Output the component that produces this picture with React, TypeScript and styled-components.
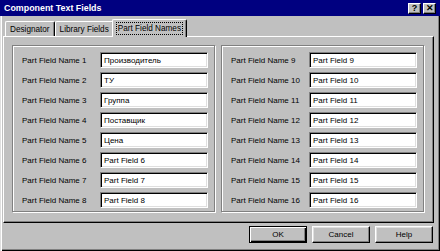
import React from 'react';
import styled, { createGlobalStyle } from 'styled-components';

const GlobalStyle = createGlobalStyle`
  html, body {
    margin: 0;
    padding: 0;
    background: #c0c0c0;
  }
  body {
    font-family: 'Liberation Sans', Arial, sans-serif;
    font-size: 8px;
    color: #000;
  }
`;

// ==============
const Window = styled.div`
  width: 440px;
  height: 251px;
  display: flex;
  flex-direction: column;
  background: #c0c0c0;
  overflow: hidden;
`;

const TitleBar = styled.div`
  height: 16px;
  flex: none;
  background: #000080;
  display: flex;
  align-items: center;
  padding: 0 4px 0 4px;
`;

const Title = styled.div`
  flex: 1;
  color: #ffffff;
  font-weight: bold;
  font-size: 8.9px;
`;

const CaptionButton = styled.div`
  width: 13px;
  height: 11px;
  box-sizing: border-box;
  margin-left: 2px;
  background: #c0c0c0;
  border-top: 1px solid #ffffff;
  border-left: 1px solid #ffffff;
  border-right: 1px solid #000000;
  border-bottom: 1px solid #000000;
  box-shadow: inset -1px -1px 0 #808080;
  display: flex;
  align-items: center;
  justify-content: center;
  font-weight: bold;
  font-size: 9px;
  line-height: 1;
  color: #000;
`;

const Body = styled.div`
  flex: 1;
  display: flex;
  flex-direction: column;
  padding: 3px 6px 0 3px;
  box-shadow: inset 1px 0 0 #dfdfdf, inset 2px 0 0 #ffffff, inset -1px -1px 0 #000000,
    inset -2px -2px 0 #808080;
`;

const TabStrip = styled.div`
  display: flex;
  align-items: flex-end;
  height: 17px;
  padding-left: 2px;
  position: relative;
  z-index: 1;
`;

const Tab = styled.div<{ $active?: boolean }>`
  box-sizing: border-box;
  height: ${(p) => (p.$active ? 18 : 15)}px;
  margin: ${(p) => (p.$active ? '0 -2px -1px -2px' : '0')};
  padding: 0 ${(p) => (p.$active ? 4 : 4)}px;
  background: #c0c0c0;
  border-top: 1px solid #ffffff;
  border-left: 1px solid #ffffff;
  border-right: 1px solid #000000;
  border-radius: 2px 2px 0 0;
  box-shadow: inset -1px 0 0 #808080;
  display: flex;
  align-items: center;
  white-space: nowrap;
  font-size: 8.2px;
`;

const FocusText = styled.span`
  outline: 1px dotted #000;
  outline-offset: 0;
  padding: 0 1px;
  line-height: 11px;
`;

const Page = styled.div`
  height: 187px;
  box-sizing: border-box;
  background: #c0c0c0;
  border-top: 1px solid #ffffff;
  border-left: 1px solid #ffffff;
  border-right: 1px solid #000000;
  border-bottom: 1px solid #000000;
  box-shadow: inset -1px -1px 0 #808080;
  display: flex;
  gap: 6px;
  padding: 8px 6px 0 8px;
`;

const GroupBox = styled.div`
  width: 203px;
  height: 167px;
  box-sizing: border-box;
  border: 1px solid #808080;
  box-shadow: 1px 1px 0 #ffffff, inset 1px 1px 0 #ffffff;
  display: flex;
  flex-direction: column;
  gap: 4px;
  padding: 6px 0 0 9px;
`;

const Row = styled.div`
  display: flex;
  align-items: center;
  height: 16px;
`;

const Label = styled.div`
  width: 78px;
  flex: none;
  white-space: nowrap;
`;

const Field = styled.div`
  width: 108px;
  height: 16px;
  box-sizing: border-box;
  background: #ffffff;
  border-top: 1px solid #808080;
  border-left: 1px solid #808080;
  border-right: 1px solid #ffffff;
  border-bottom: 1px solid #ffffff;
  box-shadow: inset 1px 1px 0 #000000, inset -1px -1px 0 #dfdfdf;
  padding: 0 3px;
  display: flex;
  align-items: center;
  white-space: nowrap;
  overflow: hidden;
`;

const Footer = styled.div`
  display: flex;
  justify-content: flex-end;
  gap: 5px;
  padding: 3px 1px 0 0;
`;

const Button = styled.div<{ $default?: boolean }>`
  width: 58px;
  height: 17px;
  box-sizing: border-box;
  background: #c0c0c0;
  border: 1px solid ${(p) => (p.$default ? '#000000' : 'transparent')};
  box-shadow: ${(p) =>
    p.$default
      ? 'inset 1px 1px 0 #ffffff, inset -1px -1px 0 #000000, inset -2px -2px 0 #808080'
      : 'none'};
  ${(p) =>
    !p.$default &&
    `border-top-color: #ffffff; border-left-color: #ffffff; border-right-color: #000000; border-bottom-color: #000000; box-shadow: inset -1px -1px 0 #808080, inset 1px 1px 0 #dfdfdf;`}
  display: flex;
  align-items: center;
  justify-content: center;
`;

const leftNames = ['Производитель', 'ТУ', 'Группа', 'Поставщик', 'Цена', 'Part Field 6', 'Part Field 7', 'Part Field 8'];
const rightNames = Array.from({ length: 8 }, (_, i) => `Part Field ${i + 9}`);

function FieldGroup({ start, values }: { start: number; values: string[] }) {
  return (
    <GroupBox>
      {values.map((v, i) => (
        <Row key={i}>
          <Label>Part Field Name {start + i}</Label>
          <Field>{v}</Field>
        </Row>
      ))}
    </GroupBox>
  );
}

export default function App() {
  return (
    <>
      <GlobalStyle />
      <Window>
        <TitleBar>
          <Title>Component Text Fields</Title>
          <CaptionButton>?</CaptionButton>
          <CaptionButton>✕</CaptionButton>
        </TitleBar>
        <Body>
          <TabStrip>
            <Tab>Designator</Tab>
            <Tab>Library Fields</Tab>
            <Tab $active>
              <FocusText>Part Field Names</FocusText>
            </Tab>
          </TabStrip>
          <Page>
            <FieldGroup start={1} values={leftNames} />
            <FieldGroup start={9} values={rightNames} />
          </Page>
          <Footer>
            <Button $default>OK</Button>
            <Button>Cancel</Button>
            <Button>Help</Button>
          </Footer>
        </Body>
      </Window>
    </>
  );
}
